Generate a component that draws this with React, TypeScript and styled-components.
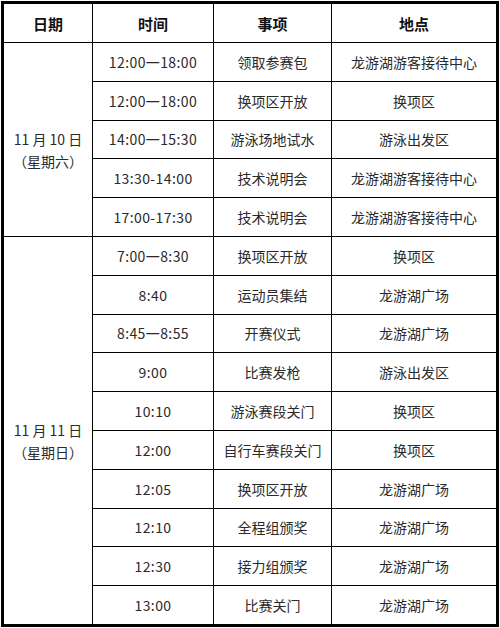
import React from "react";
import styled, { createGlobalStyle } from "styled-components";

const Global = createGlobalStyle`
  html, body { margin: 0; padding: 0; background: #fff; }
  body { font-family: "Noto Sans CJK SC", "Noto Sans", sans-serif; }
`;

const Page = styled.div`
  padding: 1px 0 0 1px;
  width: 500px;
  height: 628px;
  box-sizing: border-box;
  background: #fff;
`;

const Table = styled.table`
  border-collapse: collapse;
  table-layout: fixed;
  width: 497px;
  border: 3px solid #000;
`;

const HeadCell = styled.th`
  height: 38px;
  padding: 0;
  border: 1px solid #000;
  font-size: 15px;
  font-weight: 700;
  color: #111;
  text-align: center;
  vertical-align: middle;
`;

const Cell = styled.td`
  height: 37.8px;
  padding: 0;
  border: 1px solid #000;
  font-size: 14px;
  color: #2a2a2a;
  text-align: center;
  vertical-align: middle;
  white-space: nowrap;
`;

const TimeCell = styled(Cell)`
  letter-spacing: 0.4px;
`;

const DateCell = styled.td`
  padding: 0;
  border: 1px solid #000;
  font-size: 14px;
  color: #2a2a2a;
  text-align: center;
  vertical-align: middle;
`;

const DateBlock = styled.div`
  display: flex;
  flex-direction: column;
  align-items: center;
  gap: 6px;
  padding-top: 22px;
  line-height: 16px;
`;

type Item = { time: string; what: string; where: string };

const groups: { date: string; week: string; items: Item[] }[] = [
  {
    date: "11 月 10 日",
    week: "（星期六）",
    items: [
      { time: "12:00一18:00", what: "领取参赛包", where: "龙游湖游客接待中心" },
      { time: "12:00一18:00", what: "换项区开放", where: "换项区" },
      { time: "14:00一15:30", what: "游泳场地试水", where: "游泳出发区" },
      { time: "13:30-14:00", what: "技术说明会", where: "龙游湖游客接待中心" },
      { time: "17:00-17:30", what: "技术说明会", where: "龙游湖游客接待中心" },
    ],
  },
  {
    date: "11 月 11 日",
    week: "（星期日）",
    items: [
      { time: "7:00一8:30", what: "换项区开放", where: "换项区" },
      { time: "8:40", what: "运动员集结", where: "龙游湖广场" },
      { time: "8:45一8:55", what: "开赛仪式", where: "龙游湖广场" },
      { time: "9:00", what: "比赛发枪", where: "游泳出发区" },
      { time: "10:10", what: "游泳赛段关门", where: "换项区" },
      { time: "12:00", what: "自行车赛段关门", where: "换项区" },
      { time: "12:05", what: "换项区开放", where: "龙游湖广场" },
      { time: "12:10", what: "全程组颁奖", where: "龙游湖广场" },
      { time: "12:30", what: "接力组颁奖", where: "龙游湖广场" },
      { time: "13:00", what: "比赛关门", where: "龙游湖广场" },
    ],
  },
];

export default function App() {
  return (
    <Page>
      <Global />
      <Table>
        <colgroup>
          <col style={{ width: 90 }} />
          <col style={{ width: 121 }} />
          <col style={{ width: 118 }} />
          <col style={{ width: 166 }} />
        </colgroup>
        <thead>
          <tr>
            <HeadCell>日期</HeadCell>
            <HeadCell>时间</HeadCell>
            <HeadCell>事项</HeadCell>
            <HeadCell>地点</HeadCell>
          </tr>
        </thead>
        <tbody>
          {groups.map((g) =>
            g.items.map((it, i) => (
              <tr key={g.date + i}>
                {i === 0 && (
                  <DateCell rowSpan={g.items.length}>
                    <DateBlock>
                      <span>{g.date}</span>
                      <span>{g.week}</span>
                    </DateBlock>
                  </DateCell>
                )}
                <TimeCell>{it.time}</TimeCell>
                <Cell>{it.what}</Cell>
                <Cell>{it.where}</Cell>
              </tr>
            ))
          )}
        </tbody>
      </Table>
    </Page>
  );
}
